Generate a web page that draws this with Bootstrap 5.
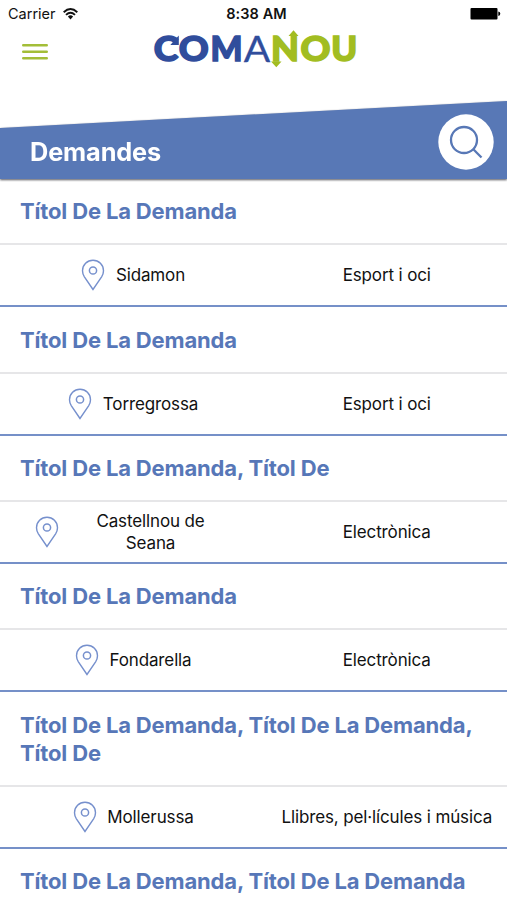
<!DOCTYPE html>
<html lang="ca">
<head>
<meta charset="utf-8">
<meta name="viewport" content="width=device-width, initial-scale=1">
<title>Comanou</title>
<link rel="stylesheet" href="https://cdn.jsdelivr.net/npm/bootstrap@5.3.0/dist/css/bootstrap.min.css">
<style>
body{font-family:Inter,"Liberation Sans",sans-serif;font-feature-settings:"locl" 0;color:#111;background:#fff;height:900px;overflow:hidden}
.statusbar{height:28px;font-size:14.5px;line-height:28px;padding:0 6px 0 8px}
.statusbar>div{flex:1 1 0}
.statusbar .clock{font-weight:600;letter-spacing:.1px;flex:0 0 auto;padding-left:4px}
.statusbar .wifi{margin-left:7px}
.topbar{height:73px;padding-left:22px}
.menu-btn{width:26px;height:16px;margin-top:16px}
.brand-logo{width:210px;height:60px;margin:-8px 0 0 102px;overflow:visible}
.banner{height:78px;filter:drop-shadow(0 1px 1.2px rgba(40,40,50,.8))}
.banner-shape{height:78px;background:#5878b6;clip-path:polygon(0 27px,100% 0,100% 100%,0 100%);padding:0 13px 0 30px}
.banner h1{font-size:25.3px;font-weight:700;letter-spacing:-.12px;line-height:32px;margin-top:35px}
.search-btn{width:56px;height:56px;margin-top:13px}
.demand-title{color:#5777b8;font-size:22px;font-weight:700;letter-spacing:-.16px;line-height:28.4px;padding:18.4px 10px 17.6px 20px;border-bottom:2px solid #e6e6e8}
.demand-info{height:61.9px;border-bottom:2.5px solid #7590c8;font-size:17px;letter-spacing:-.13px;line-height:22px}
.place{padding:0 22px 0 35px}
.place svg{width:24px;height:32px;margin-right:10.5px;flex:none}
.topic{padding-left:13px}
</style>
<script src="https://cdn.jsdelivr.net/npm/bootstrap@5.3.0/dist/js/bootstrap.bundle.min.js"></script>
</head>
<body>
<svg class="d-none"><symbol id="pin" viewBox="0 0 24 32"><path d="M12 30.500 3.400 17.800Q1.500 14.800 1.500 11.700a10.500 10.500 0 0 1 21 0Q22.500 14.800 20.600 17.800Z" fill="none" stroke="#7690cd" stroke-width="1.400"/><circle cx="12" cy="11.500" r="3.600" fill="none" stroke="#7690cd" stroke-width="1.500"/></symbol></svg>
<div class="statusbar d-flex align-items-center">
  <div class="d-flex align-items-center"><span>Carrier</span>
    <svg class="wifi" width="15" height="12" viewBox="0 0 15 12" fill="none" stroke="#111" stroke-width="1.900"><path d="M.7 4.200Q7.500-2 14.300 4.200M3 6.900Q7.500 2.700 12 6.900"/><path d="M4.900 8.500Q7.500 6.200 10.100 8.500L7.500 11.500Z" fill="#111" stroke="none"/></svg></div>
  <span class="clock">8:38 AM</span>
  <div class="d-flex justify-content-end"><svg width="31" height="13" viewBox="0 0 31 13"><rect x=".5" y="0" width="27" height="11.500" rx="1"/><path d="M28.300 3.500q2 .4 2 2.200t-2 2.200Z"/></svg></div>
</div>
<header class="topbar d-flex align-items-start">
  <svg class="menu-btn" viewBox="0 0 26 16" stroke="#a3be38" stroke-width="2.400" stroke-linecap="round"><path d="M1.200 1.300h23.600M1.200 7.800h23.600M1.200 14.300h23.600"/></svg>
  <svg class="brand-logo" viewBox="150 20 210 60" font-family="Lato,sans-serif" font-size="35" font-weight="900">
    <g fill="#304d9c" stroke="#304d9c" stroke-width="1.500">
      <text x="153.800" y="61" textLength="24.500" lengthAdjust="spacingAndGlyphs">C</text>
      <text x="178.700" y="61" textLength="30" lengthAdjust="spacingAndGlyphs">O</text>
      <text x="210.500" y="61" textLength="32" lengthAdjust="spacingAndGlyphs">M</text>
      <text x="243.800" y="61.500" font-size="36" font-weight="400" stroke-width=".3" textLength="26.500" lengthAdjust="spacingAndGlyphs">A</text>
      <path d="M178.800 35.500v9.500h-8.500Z" stroke="none"/>
    </g>
    <g fill="#a2bd21" stroke="#a2bd21" stroke-width="1.500">
      <text x="271" y="61" textLength="28" lengthAdjust="spacingAndGlyphs">N</text>
      <text x="300.500" y="61" textLength="30" lengthAdjust="spacingAndGlyphs">O</text>
      <text x="331.300" y="61" textLength="26" lengthAdjust="spacingAndGlyphs">U</text>
      <path d="M288.500 36 293.500 30.200 298.500 36ZM271 61.500h10.500L276.300 67.300Z" stroke="none"/>
    </g>
  </svg>
</header>
<section class="banner"><div class="banner-shape d-flex justify-content-between align-items-start">
  <h1 class="text-white mb-0"><span>Demandes</span></h1>
  <svg class="search-btn" viewBox="0 0 56 56"><circle cx="28" cy="28" r="27.700" fill="#fff"/><g fill="none" stroke="#5878b6" stroke-width="2.300"><circle cx="26" cy="26" r="13"/><path d="M35.300 35.300 43.500 43.500"/></g></svg>
</div></section>
<main>
  <article><h2 class="demand-title mb-0">Títol De La Demanda</h2>
    <div class="demand-info row g-0 align-items-center text-center"><div class="col-6 place d-flex align-items-center justify-content-center"><svg><use href="#pin"/></svg><span>Sidamon</span></div><div class="col-6 topic">Esport i oci</div></div></article>
  <article><h2 class="demand-title mb-0">Títol De La Demanda</h2>
    <div class="demand-info row g-0 align-items-center text-center"><div class="col-6 place d-flex align-items-center justify-content-center"><svg><use href="#pin"/></svg><span>Torregrossa</span></div><div class="col-6 topic">Esport i oci</div></div></article>
  <article><h2 class="demand-title mb-0">Títol De La Demanda, Títol De</h2>
    <div class="demand-info row g-0 align-items-center text-center"><div class="col-6 place d-flex align-items-center justify-content-center"><svg><use href="#pin"/></svg><span class="flex-fill">Castellnou de<br>Seana</span></div><div class="col-6 topic">Electrònica</div></div></article>
  <article><h2 class="demand-title mb-0">Títol De La Demanda</h2>
    <div class="demand-info row g-0 align-items-center text-center"><div class="col-6 place d-flex align-items-center justify-content-center"><svg><use href="#pin"/></svg><span>Fondarella</span></div><div class="col-6 topic">Electrònica</div></div></article>
  <article><h2 class="demand-title mb-0">Títol De La Demanda, Títol De La Demanda,<br>Títol De</h2>
    <div class="demand-info row g-0 align-items-center text-center"><div class="col-6 place d-flex align-items-center justify-content-center"><svg><use href="#pin"/></svg><span>Mollerussa</span></div><div class="col-6 topic">Llibres, pel·lícules i música</div></div></article>
  <article><h2 class="demand-title mb-0">Títol De La Demanda, Títol De La Demanda</h2></article>
</main>
</body>
</html>
